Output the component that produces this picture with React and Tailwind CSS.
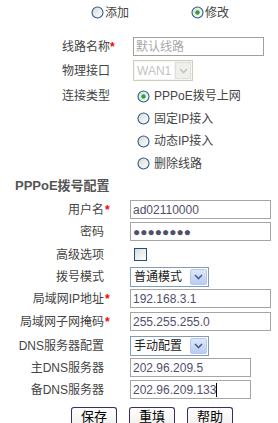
import React from "react";

const Radio = ({ checked }) => (
  <svg width="13" height="13" viewBox="0 0 13 13" className="shrink-0">
    <defs>
      <linearGradient id="rg" x1="0" y1="0" x2="1" y2="1">
        <stop offset="0" stopColor="#d8d8d2" />
        <stop offset="1" stopColor="#ffffff" />
      </linearGradient>
    </defs>
    <circle cx="6.5" cy="6.5" r="5.5" fill="url(#rg)" stroke="#2a5c8e" strokeWidth="1.1" />
    {checked && <circle cx="6.5" cy="6.5" r="2.2" fill="#27a534" />}
  </svg>
);

const Chevron = ({ color }) => (
  <svg width="9" height="6" viewBox="0 0 9 6">
    <path d="M1 1 L4.5 4.5 L8 1" fill="none" stroke={color} strokeWidth="1.6" />
  </svg>
);

const Input = ({ value, w = "w-[141px]", caret }) => (
  <div className={`${w} h-[19px] border border-[#a5a5a5] bg-white flex items-center pl-[2px] text-[#50506a] font-['Liberation_Sans',sans-serif] text-[12px] leading-none`}>
    <span>{value}</span>
    {caret && <span className="w-px h-[14px] bg-black" />}
  </div>
);

const Select = ({ value }) => (
  <div className="w-[79px] h-[20px] border border-[#7f9db9] bg-white flex items-center justify-between pl-[3px] pr-[1px]">
    <span className="text-[#222] leading-none">{value}</span>
    <div className="w-[17px] h-[16px] rounded-[2px] border border-[#b6c8ee] bg-gradient-to-b from-[#dde7fb] to-[#b9ccf3] flex items-center justify-center">
      <Chevron color="#4d6185" />
    </div>
  </div>
);

const Star = () => <span className="text-[#ff0000] font-bold text-[12px] leading-none">*</span>;

const Row = ({ label, star, mt, h, children }) => (
  <div className={`flex items-center ${mt} ${h}`}>
    <div className="w-[104px] text-right leading-none whitespace-nowrap">{label}</div>
    <div className="w-[26px] leading-none pl-[1px]">{star && <Star />}</div>
    {children}
  </div>
);

const Button = ({ children }) => (
  <div className="w-[46px] h-[20px] rounded-[3px] border border-[#3f2b63] bg-gradient-to-b from-white to-[#f1f1ef] border-b-[3px] border-b-[#80d96c] flex items-center justify-center text-[13px] text-black leading-none">
    {children}
  </div>
);

export default function App() {
  return (
    <div className="w-[278px] h-[423px] bg-white overflow-hidden text-[12px] text-[#444] font-['Liberation_Sans','Noto_Sans_CJK_SC',sans-serif]">
      <div className="flex h-[25px] items-center pl-[91px]">
        <div className="flex items-center gap-[1px] w-[100px]">
          <Radio /> <span className="leading-none">添加</span>
        </div>
        <div className="flex items-center gap-[1px]">
          <Radio checked /> <span className="leading-none">修改</span>
        </div>
      </div>

      <div className="pl-[62px]">
        <div className="flex items-center mt-[12px] h-[19px]">
          <div className="w-[71px] leading-none">线路名称<Star /></div>
          <div className="w-[131px] h-[19px] border border-[#a0a0a0] flex items-center pl-[2px] text-[#a8a8a8] leading-none">默认线路</div>
        </div>
        <div className="flex items-center mt-[4px] h-[21px]">
          <div className="w-[71px] leading-none">物理接口</div>
          <div className="w-[60px] h-[21px] border border-[#cfcdbf] flex items-center bg-[#f5f4ee] p-[1px]">
            <div className="flex-1 h-full bg-white flex items-center pl-[2px] text-[#c2c2c2] font-['Liberation_Sans',sans-serif] leading-none">WAN1</div>
            <div className="w-[16px] h-full ml-[1px] border border-[#e0e0da] bg-[#efefec] flex items-center justify-center">
              <Chevron color="#c4c4c4" />
            </div>
          </div>
        </div>
        <div className="flex items-center h-[22px] mt-[4px]">
          <div className="w-[75px] leading-none">连接类型</div>
          <div className="flex items-center gap-[4px]"><Radio checked /><span className="leading-none">PPPoE拨号上网</span></div>
        </div>
        <div className="flex items-center h-[23px]">
          <div className="w-[75px]" />
          <div className="flex items-center gap-[4px]"><Radio /><span className="leading-none">固定IP接入</span></div>
        </div>
        <div className="flex items-center h-[22px]">
          <div className="w-[75px]" />
          <div className="flex items-center gap-[4px]"><Radio /><span className="leading-none">动态IP接入</span></div>
        </div>
        <div className="flex items-center h-[23px]">
          <div className="w-[75px]" />
          <div className="flex items-center gap-[4px]"><Radio /><span className="leading-none">删除线路</span></div>
        </div>
      </div>

      <div className="h-[20px] flex items-center pl-[15px] font-bold text-[13px] text-[#555] leading-none">PPPoE拨号配置</div>

      <Row label="用户名" star mt="mt-[5px]" h="h-[19px]"><Input value="ad02110000" /></Row>
      <Row label="密码" mt="mt-[3px]" h="h-[19px]"><Input value="●●●●●●●●" /></Row>
      <Row label="高级选项" mt="mt-[7px]" h="h-[13px]">
        <div className="ml-[4px] w-[13px] h-[13px] border border-[#1c5180] bg-gradient-to-br from-[#dcdcd7] to-white" />
      </Row>
      <Row label="拨号模式" mt="mt-[6px]" h="h-[20px]"><Select value="普通模式" /></Row>
      <Row label="局域网IP地址" star mt="mt-[2px]" h="h-[19px]"><Input value="192.168.3.1" /></Row>
      <Row label="局域网子网掩码" star mt="mt-[4px]" h="h-[19px]"><Input value="255.255.255.0" /></Row>
      <Row label="DNS服务器配置" mt="mt-[5px]" h="h-[20px]"><Select value="手动配置" /></Row>
      <Row label="主DNS服务器" mt="mt-[2px]" h="h-[19px]"><Input value="202.96.209.5" w="w-[121px]" /></Row>
      <Row label="备DNS服务器" mt="mt-[3px]" h="h-[19px]"><Input value="202.96.209.133" w="w-[121px]" caret /></Row>

      <div className="flex mt-[8px] pl-[71px] gap-[12px]">
        <Button>保存</Button>
        <Button>重填</Button>
        <Button>帮助</Button>
      </div>
    </div>
  );
}
